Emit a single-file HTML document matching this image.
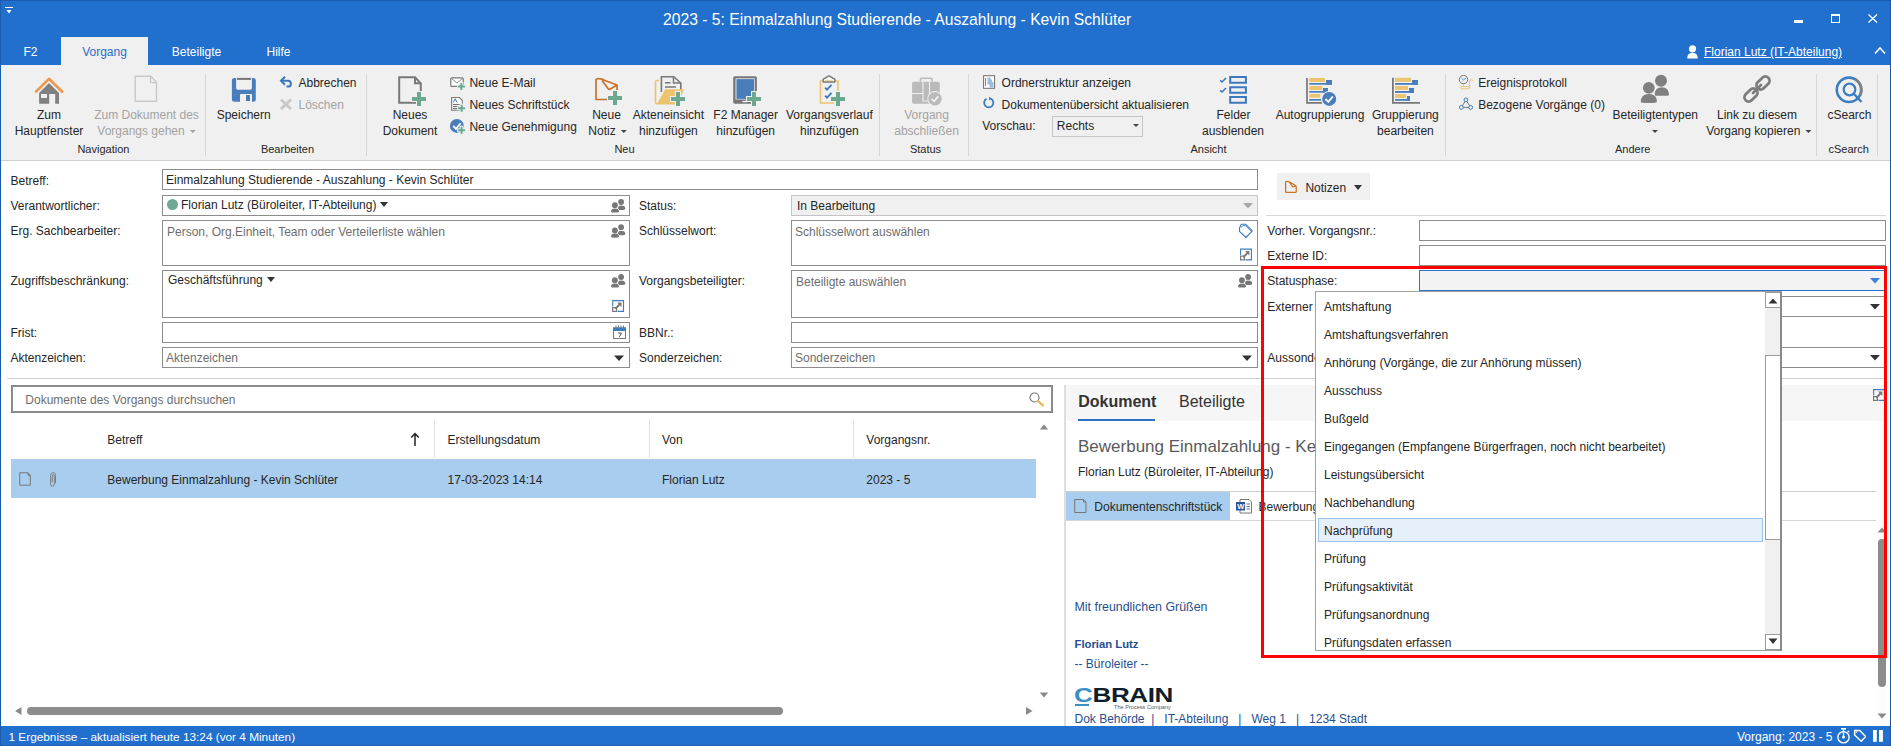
<!DOCTYPE html>
<html><head><meta charset="utf-8">
<style>
*{box-sizing:border-box;margin:0;padding:0}
html,body{width:1891px;height:746px;overflow:hidden;background:#fff;font-family:"Liberation Sans",sans-serif;font-size:12px;color:#262626}
.a{position:absolute}
.t{position:absolute;white-space:nowrap;line-height:16px;font-size:12px;color:#262626}
.c{transform:translateX(-50%);text-align:center}
.dis{color:#a3a3a3}
.w{color:#fff}
.sep{position:absolute;top:74px;width:1px;height:82px;background:#d6d6d6}
.box{position:absolute;border:1px solid #8c8c8c;background:#fff}
.ph{color:#6e6e6e}
svg{position:absolute;overflow:visible}
.dd{display:inline-block;width:0;height:0;border-left:3px solid transparent;border-right:3px solid transparent;border-top:3px solid #444;margin-left:5px;vertical-align:2px}
.gl{font-size:11px}
</style></head><body>
<!-- title bar + tabs -->
<div class="a" style="left:0;top:0;width:1891px;height:65px;background:#2170ce"></div>
<div id="title" class="t w" style="left:663px;top:10px;font-size:15.7px;line-height:20px">2023 - 5: Einmalzahlung Studierende - Auszahlung - Kevin Schlüter</div>


<!-- quick access -->
<div class="a" style="left:5px;top:7px;width:8px;height:1px;background:#fff"></div>
<svg style="left:0;top:0" width="20" height="20"><path d="M6.5 10 L11.5 10 L9 13.5 Z" fill="#fff"/></svg>
<!-- window controls -->
<div class="a" style="left:1794px;top:20px;width:9px;height:3px;background:#fff"></div>
<svg style="left:0;top:0" width="1891" height="30"><rect x="1831.5" y="14.5" width="8" height="8" fill="none" stroke="#fff" stroke-width="1"/><rect x="1831" y="14" width="9" height="2" fill="#fff"/>
<path d="M1868.5 14.5 L1877 22.5 M1877 14.5 L1868.5 22.5" stroke="#fff" stroke-width="1.3"/></svg>
<!-- user -->
<svg style="left:1687px;top:45px" width="12" height="14"><circle cx="5.5" cy="3.8" r="3.6" fill="#fff"/><path d="M0.3 13.5 C0.3 9 2.5 8 5.5 8 C8.5 8 10.7 9 10.7 13.5 Z" fill="#fff"/></svg>
<div class="t w" style="left:1704px;top:44px;text-decoration:underline">Florian Lutz (IT-Abteilung)</div>
<svg style="left:1874px;top:46px" width="13" height="9"><path d="M1 7.5 L6 2 L11 7.5" fill="none" stroke="#fff" stroke-width="1.6"/></svg>
<!-- tabs -->
<div class="t w c" style="left:30.5px;top:44px">F2</div>
<div class="a" style="left:61px;top:37px;width:87px;height:28px;background:#f0f0f0"></div>
<div class="t c" style="left:104.5px;top:44px;color:#2b6fc7">Vorgang</div>
<div class="t w c" style="left:196.5px;top:44px">Beteiligte</div>
<div class="t w c" style="left:278.5px;top:44px">Hilfe</div>

<!-- ribbon -->
<div class="a" style="left:1px;top:65px;width:1889px;height:96px;background:#f0f0f0;border-bottom:1px solid #cfcfcf"></div>


<svg style="left:0;top:0" width="1891" height="161">
<!-- house -->
<path d="M39.1 93 L49 83 L59 93 V103.8 H39.1 Z" fill="#808080"/>
<rect x="41" y="94" width="6" height="4" fill="#f0f0f0"/><rect x="49.2" y="94" width="6" height="10" fill="#f0f0f0"/>
<path d="M36 91.7 L49 78.8 L62.2 91.7" fill="none" stroke="#f0954a" stroke-width="2.6" stroke-linecap="round" stroke-linejoin="round"/>
<!-- disabled doc -->
<path d="M135.3 76.3 H150.7 L156.5 82.3 V101.3 H135.3 Z M150.5 76.3 V82.6 H156.5" fill="none" stroke="#c9c9c9" stroke-width="1.4"/>
<!-- save -->
<rect x="231.9" y="77.9" width="23.9" height="23.9" rx="2.5" fill="#4a7ebb"/>
<path d="M236.1 77.9 H251.9 V88 Q251.9 89.7 250.2 89.7 H237.8 Q236.1 89.7 236.1 88 Z" fill="#f0f0f0"/>
<rect x="237" y="77.9" width="14" height="2" fill="#777"/>
<path d="M240 101.9 V95 Q240 93.9 241 93.9 H251 Q252 93.9 252 95 V101.9 Z" fill="#f0f0f0"/>
<rect x="246" y="95" width="4" height="6" fill="#4a7ebb"/>
<!-- undo -->
<path d="M285 76.8 L281 80.8 L285 84.8" fill="none" stroke="#3d77bd" stroke-width="2"/>
<path d="M281.5 80.8 H288 A2.9 2.9 0 0 1 288 86.6 H286.5" fill="none" stroke="#3d77bd" stroke-width="2"/>
<!-- X disabled -->
<path d="M281 99.5 L291 109 M291 99.5 L281 109" stroke="#c8c8c8" stroke-width="3"/>
<!-- neues dokument -->
<path d="M399.2 77.2 H415 L420.8 83.3 V102.8 H399.2 Z M415 77.2 V83.3 H420.8" fill="none" stroke="#787878" stroke-width="2"/>
<path d="M411 95.9h16v6h-16z M416.0 90.9h6v16h-6z" fill="#f0f0f0"/><path d="M412 96.9h14v4h-14z M417.0 91.9h4v14h-4z" fill="#6ba88f"/>
<!-- email -->
<rect x="450.8" y="77.8" width="12.4" height="8.6" rx="1" fill="#fff" stroke="#7a7a7a" stroke-width="1.2"/>
<path d="M451.5 78.5 L457 83 L462.5 78.5" fill="none" stroke="#7a7a7a" stroke-width="0.9"/>
<path d="M456.9 84.4h9.0v4h-9.0z M459.4 81.9h4v9.0h-4z" fill="#f0f0f0"/><path d="M457.9 85.4h7.0v2h-7.0z M460.4 82.9h2v7.0h-2z" fill="#6ba88f"/>
<!-- schriftstueck -->
<path d="M451.6 97.5 H459.5 L462.3 100.3 V110.3 H451.6 Z" fill="#fff" stroke="#7a7a7a" stroke-width="1.1"/>
<path d="M453.3 102.5 L455.2 98.8 L457.1 102.5" fill="none" stroke="#3d77bd" stroke-width="1"/>
<path d="M453 104.6 H460 M453 106.6 H459 M453 108.6 H458" stroke="#555" stroke-width="0.9"/>
<path d="M457.1 106.3h9.0v4h-9.0z M459.6 103.8h4v9.0h-4z" fill="#f0f0f0"/><path d="M458.1 107.3h7.0v2h-7.0z M460.6 104.8h2v7.0h-2z" fill="#6ba88f"/>
<!-- genehmigung -->
<circle cx="456.9" cy="125.9" r="7" fill="#4a7ebb"/>
<path d="M453.2 126 L456 128.8 L460.6 123.2" fill="none" stroke="#fff" stroke-width="1.8"/>
<path d="M457.1 128.2h9.0v4h-9.0z M459.6 125.69999999999999h4v9.0h-4z" fill="#f0f0f0"/><path d="M458.1 129.2h7.0v2h-7.0z M460.6 126.69999999999999h2v7.0h-2z" fill="#6ba88f"/>
<!-- neue notiz -->
<path d="M596 79 Q601 78 605 80.5 L617 85 V91 M617 85 L610.3 89 Q609 90 608 88.5 L602 80.5 M596 79 V99.5 H608" fill="none" stroke="#c8732a" stroke-width="1.7" stroke-linejoin="round"/>
<path d="M607 95.0h16v6h-16z M612.0 90h6v16h-6z" fill="#f0f0f0"/><path d="M608 96.0h14v4h-14z M613.0 91h4v14h-4z" fill="#6ba88f"/>
<!-- akteneinsicht -->
<path d="M659 80.5 H656.6 Q655.5 80.5 655.5 81.6 V102.5 Q655.5 103.8 657 103.8 H675" fill="none" stroke="#ecc470" stroke-width="1.6"/>
<path d="M661.4 92 V76.7 H673.7 L680.8 83 V89.5" fill="none" stroke="#777" stroke-width="1.6"/>
<path d="M673.5 76.7 V83 H680.8 M665 82.8 H670.5 M665 87 H676" fill="none" stroke="#777" stroke-width="1.5"/>
<path d="M657 103.8 L665.2 89.3 H684 L680 100 L676 103.8 Z" fill="#ecc470"/>
<path d="M670 96.0h16v6h-16z M675.0 91h6v16h-6z" fill="#f0f0f0"/><path d="M671 97.0h14v4h-14z M676.0 92h4v14h-4z" fill="#6ba88f"/>
<!-- f2 manager -->
<rect x="733.2" y="76.2" width="23.7" height="27.5" rx="1.6" fill="#777"/>
<rect x="735.6" y="78.4" width="19" height="21" fill="#fff"/>
<rect x="736.4" y="79.1" width="17.6" height="19.8" fill="#4a7ebb"/>
<rect x="742.5" y="100.9" width="4" height="1.3" fill="#fff"/>
<path d="M746 95.9h16v6h-16z M751.0 90.9h6v16h-6z" fill="#f0f0f0"/><path d="M747 96.9h14v4h-14z M752.0 91.9h4v14h-4z" fill="#6ba88f"/>
<!-- vorgangsverlauf -->
<path d="M822.5 81 H820.5 V103 H834 M835.5 81 H838 V91" fill="none" stroke="#ecc470" stroke-width="1.6"/>
<path d="M823.3 82 Q822.4 78.5 825 78.3 L827.5 76.6 Q829 75.3 830.5 76.6 L833 78.3 Q835.8 78.5 834.7 82 Z" fill="#fff" stroke="#777" stroke-width="1.5"/>
<path d="M825 80.3 H832.6" stroke="#ecc470" stroke-width="0.9"/>
<path d="M825.1 87.6 L827 89.6 L831.5 84.9 M825.1 95.6 L827 97.6 L831.5 92.9" fill="none" stroke="#3d77bd" stroke-width="1.8"/>
<path d="M830 95.9h16v6h-16z M835.0 90.9h6v16h-6z" fill="#f0f0f0"/><path d="M831 96.9h14v4h-14z M836.0 91.9h4v14h-4z" fill="#6ba88f"/>
<!-- vorgang abschliessen disabled -->
<path d="M920.4 81.5 V79.8 Q920.4 78.2 922 78.2 H930.5 Q932 78.2 932 79.8 V81.5" fill="none" stroke="#bababa" stroke-width="1.6"/>
<rect x="912.1" y="81.8" width="27.7" height="22" rx="1.8" fill="#bababa"/>
<path d="M912 93.5 H923 M923 81.8 V101 H929.5 V81.8" fill="none" stroke="#f0f0f0" stroke-width="1.1"/>
<circle cx="935" cy="98.7" r="7.6" fill="#f0f0f0"/><circle cx="935" cy="98.7" r="6.7" fill="#bababa"/>
<path d="M931.5 98.8 L934 101.3 L938.3 96.3" fill="none" stroke="#f0f0f0" stroke-width="1.8"/>
<!-- ordnerstruktur -->
<rect x="983.6" y="75.7" width="11" height="12.6" fill="#fff" stroke="#6d6d6d" stroke-width="1"/>
<path d="M985.5 78 V86" stroke="#555" stroke-width="0.7"/>
<path d="M987.5 77.5 h3 v2 h1.5 v2.5 h1.5 v5.5 h-4 v-3 h-2 Z" fill="#9dbbdc"/>
<!-- refresh -->
<path d="M986.5 98.8 A4.6 4.6 0 1 0 991 98.8" fill="none" stroke="#3d7cc0" stroke-width="1.8"/>
<path d="M989.3 96.5 L991.8 98.8 L988.8 100.5 Z" fill="#3d7cc0"/>
<!-- felder ausblenden -->
<path d="M1230.2 77 h15.7 v5.7 h-15.7 Z M1230.2 87.2 h15.7 v5.5 h-15.7 Z M1230.2 97.1 h15.7 v5.7 h-15.7 Z" fill="none" stroke="#3d78bd" stroke-width="2"/>
<path d="M1220.2 80.3 L1222 82 L1226 78 M1220.2 90.3 L1222 92 L1226 88" fill="none" stroke="#3d78bd" stroke-width="1.6"/>
<!-- autogruppierung -->
<path d="M1307 77.9 V102.9 H1322" fill="none" stroke="#777" stroke-width="1.7"/>
<rect x="1309.3" y="78" width="15.7" height="4" fill="#eac46e"/><rect x="1326" y="80" width="6" height="4.7" fill="#4a7ebb"/><rect x="1309.3" y="83" width="22.7" height="1.7" fill="#4a7ebb"/>
<rect x="1309.3" y="86" width="13" height="4" fill="#eac46e"/><rect x="1323" y="88" width="5" height="4.7" fill="#4a7ebb"/><rect x="1309.3" y="91" width="18.7" height="1.7" fill="#4a7ebb"/>
<rect x="1309.3" y="94" width="11" height="3.7" fill="#eac46e"/><rect x="1309.3" y="99" width="12" height="1.7" fill="#4a7ebb"/>
<circle cx="1329.2" cy="98.9" r="7.8" fill="#f0f0f0"/><circle cx="1329.2" cy="98.9" r="7" fill="#4a7ebb"/>
<path d="M1325.5 99 L1328.3 101.8 L1332.8 96.5" fill="none" stroke="#fff" stroke-width="1.9"/>
<!-- gruppierung bearbeiten -->
<path d="M1392.9 77.8 V102.9 H1420" fill="none" stroke="#777" stroke-width="1.8"/>
<rect x="1395" y="77.8" width="16" height="4" fill="#eac46e"/><rect x="1412" y="80" width="6" height="4.8" fill="#4a7ebb"/><rect x="1395" y="83" width="23" height="1.8" fill="#4a7ebb"/>
<rect x="1395" y="86" width="13" height="3.9" fill="#eac46e"/><rect x="1409" y="88" width="5" height="4.9" fill="#4a7ebb"/><rect x="1395" y="91" width="19" height="1.9" fill="#4a7ebb"/>
<rect x="1395" y="94.1" width="11" height="3.9" fill="#eac46e"/><rect x="1407" y="96" width="3" height="4.8" fill="#4a7ebb"/><rect x="1395" y="99" width="15" height="1.8" fill="#4a7ebb"/>
<!-- ereignisprotokoll -->
<circle cx="1463.5" cy="79.6" r="4.2" fill="none" stroke="#666" stroke-width="0.9"/>
<path d="M1461.6 78.2 L1463.5 80 L1465.8 78.2" fill="none" stroke="#3d77bd" stroke-width="0.9"/>
<path d="M1463.5 84 V86.3" stroke="#ecc470" stroke-width="1"/>
<path d="M1462 86.6 H1468.5 Q1469.8 86.6 1469.8 87.7 Q1469.8 88.8 1468.5 88.8 H1462 Q1460.7 88.8 1460.7 87.7 Q1460.7 86.6 1462 86.6 Z" fill="none" stroke="#ecc470" stroke-width="1"/>
<path d="M1469.6 88 V81 Q1469.6 79.8 1470.8 79.8 H1471.8 Q1473 79.8 1473 81" fill="none" stroke="#ecc470" stroke-width="1"/>
<!-- bezogene -->
<path d="M1465.9 99.9 L1461.4 107.4 L1470.7 107.4 Z" fill="none" stroke="#666" stroke-width="0.9"/>
<circle cx="1465.9" cy="99.9" r="1.9" fill="#f0f0f0" stroke="#3d77bd" stroke-width="1"/>
<circle cx="1461.4" cy="107.4" r="1.9" fill="#f0f0f0" stroke="#3d77bd" stroke-width="1"/>
<circle cx="1470.7" cy="107.4" r="1.9" fill="#f0f0f0" stroke="#3d77bd" stroke-width="1"/>
<!-- beteiligtentypen -->
<circle cx="1661" cy="80.8" r="6" fill="#808080"/>
<path d="M1654.5 95.8 Q1654.3 87.5 1661.5 87.2 Q1669 87.5 1669 94.5 Q1669 95.8 1667 95.8 Z" fill="#808080"/>
<circle cx="1648.8" cy="87.8" r="6.9" fill="#f0f0f0"/>
<path d="M1639.8 103.5 Q1639.6 93 1648.8 93 Q1658 93 1658 103.5 Z" fill="#f0f0f0"/>
<circle cx="1648.8" cy="87.8" r="5.9" fill="#808080"/>
<path d="M1640.8 102 Q1640.8 94 1648.8 94 Q1657 94 1657 101.5 Q1657 103 1648.8 103 Q1640.8 103 1640.8 102 Z" fill="#808080"/>
<!-- link -->
<g fill="none" stroke="#7d7d7d" stroke-width="2.8">
<rect x="-7.5" y="-4.2" width="15" height="8.4" rx="4.2" transform="translate(1763 83) rotate(-45)" />
<rect x="-7.5" y="-4.2" width="15" height="8.4" rx="4.2" transform="translate(1751 95) rotate(-45)" />
</g>
<path d="M1753 93 L1761 85" stroke="#7d7d7d" stroke-width="2.8" stroke-linecap="round"/>
<!-- csearch -->
<circle cx="1849" cy="89.8" r="12.2" fill="none" stroke="#3d7cc0" stroke-width="2.6"/>
<path d="M1855 79.2 A12.2 12.2 0 0 1 1860.2 95.2" fill="none" stroke="#808080" stroke-width="2.6"/>
<circle cx="1849.5" cy="89.5" r="5.8" fill="none" stroke="#3d7cc0" stroke-width="2.2"/>
<path d="M1853.8 93.8 L1861.5 102" stroke="#3d7cc0" stroke-width="2.4"/>
</svg>
<div class="sep" style="left:205px"></div><div class="sep" style="left:366px"></div><div class="sep" style="left:879px"></div><div class="sep" style="left:968px"></div><div class="sep" style="left:1445px"></div><div class="sep" style="left:1816px"></div><div class="sep" style="left:1877px"></div><div class="t c " style="left:49px;top:107px">Zum</div><div class="t c " style="left:49px;top:123px">Hauptfenster</div><div class="t c dis" style="left:146.5px;top:107px">Zum Dokument des</div><div class="t c dis" style="left:146.5px;top:123px">Vorgangs gehen<i class="dd" style="border-top-color:#a3a3a3"></i></div><div class="t c " style="left:243.7px;top:107px">Speichern</div><div class="t " style="left:298.5px;top:75px">Abbrechen</div><div class="t dis" style="left:298.5px;top:97px">Löschen</div><div class="t c " style="left:410px;top:107px">Neues</div><div class="t c " style="left:410px;top:123px">Dokument</div><div class="t " style="left:469.4px;top:75px">Neue E-Mail</div><div class="t " style="left:469.4px;top:97px">Neues Schriftstück</div><div class="t " style="left:469.4px;top:119px">Neue Genehmigung</div><div class="t c " style="left:606.5px;top:107px">Neue</div><div class="t c " style="left:607.5px;top:123px">Notiz<i class="dd"></i></div><div class="t c " style="left:668.4px;top:107px">Akteneinsicht</div><div class="t c " style="left:668.4px;top:123px">hinzufügen</div><div class="t c " style="left:745.7px;top:107px">F2 Manager</div><div class="t c " style="left:745.7px;top:123px">hinzufügen</div><div class="t c " style="left:829.4px;top:107px">Vorgangsverlauf</div><div class="t c " style="left:829.4px;top:123px">hinzufügen</div><div class="t c dis" style="left:926.6px;top:107px">Vorgang</div><div class="t c dis" style="left:926.6px;top:123px">abschließen</div><div class="t " style="left:1001.6px;top:75px">Ordnerstruktur anzeigen</div><div class="t " style="left:1001.6px;top:97px">Dokumentenübersicht aktualisieren</div><div class="t " style="left:982.2px;top:118px">Vorschau:</div><div class="box" style="left:1052px;top:116px;width:91px;height:21px;border-color:#c5c5c5;background:transparent"></div><div class="t " style="left:1056.8px;top:118px">Rechts</div><div class="t c " style="left:1233.5px;top:107px">Felder</div><div class="t c " style="left:1233px;top:123px">ausblenden</div><div class="t c " style="left:1320px;top:107px">Autogruppierung</div><div class="t c " style="left:1405.4px;top:107px">Gruppierung</div><div class="t c " style="left:1405.4px;top:123px">bearbeiten</div><div class="t " style="left:1478.2px;top:75px">Ereignisprotokoll</div><div class="t " style="left:1478.2px;top:97px">Bezogene Vorgänge (0)</div><div class="t c " style="left:1655.3px;top:107px">Beteiligtentypen</div><div class="t c " style="left:1757px;top:107px">Link zu diesem</div><div class="t c " style="left:1758.8px;top:123px">Vorgang kopieren<i class="dd"></i></div><div class="t c " style="left:1849.5px;top:107px">cSearch</div><div class="t c " style="left:103.4px;top:141px;font-size:11px">Navigation</div><div class="t c " style="left:287.5px;top:141px;font-size:11px">Bearbeiten</div><div class="t c " style="left:624.5px;top:141px;font-size:11px">Neu</div><div class="t c " style="left:925.5px;top:141px;font-size:11px">Status</div><div class="t c " style="left:1208.5px;top:141px;font-size:11px">Ansicht</div><div class="t c " style="left:1632.7px;top:141px;font-size:11px">Andere</div><div class="t c " style="left:1848.7px;top:141px;font-size:11px">cSearch</div><svg style="left:0;top:0" width="1891" height="161">
<path d="M1133 124 h6 l-3 3z" fill="#444"/>
<path d="M1652 130 h6 l-3 3z" fill="#444"/>
</svg>
<!-- form area -->

<div class="t" style="left:10.5px;top:172.6px;">Betreff:</div><div class="t" style="left:10.5px;top:197.7px;">Verantwortlicher:</div><div class="t" style="left:10.5px;top:223px;">Erg. Sachbearbeiter:</div><div class="t" style="left:10.5px;top:273px;">Zugriffsbeschränkung:</div><div class="t" style="left:10.5px;top:324.8px;">Frist:</div><div class="t" style="left:10.5px;top:349.5px;">Aktenzeichen:</div><div class="t" style="left:639px;top:197.5px;">Status:</div><div class="t" style="left:639px;top:223px;">Schlüsselwort:</div><div class="t" style="left:639px;top:273px;">Vorgangsbeteiligter:</div><div class="t" style="left:639px;top:324.5px;">BBNr.:</div><div class="t" style="left:639px;top:349.5px;">Sonderzeichen:</div><div class="box" style="left:162px;top:169px;width:1096px;height:21px;"></div><div class="box" style="left:162px;top:195px;width:468px;height:21px;"></div><div class="box" style="left:162px;top:220px;width:468px;height:46px;"></div><div class="box" style="left:162px;top:270px;width:468px;height:48px;"></div><div class="box" style="left:162px;top:322px;width:468px;height:21px;"></div><div class="box" style="left:162px;top:347px;width:468px;height:21px;"></div><div class="box" style="left:791px;top:195px;width:467px;height:21px;background:#f0f0f0;border-color:#c4c4c4"></div><div class="box" style="left:791px;top:220px;width:467px;height:46px;"></div><div class="box" style="left:791px;top:270px;width:467px;height:48px;"></div><div class="box" style="left:791px;top:322px;width:467px;height:21px;"></div><div class="box" style="left:791px;top:347px;width:467px;height:21px;"></div><div class="t" style="left:166px;top:172px;">Einmalzahlung Studierende - Auszahlung - Kevin Schlüter</div><div class="a" style="left:167px;top:199px;width:11px;height:11px;border-radius:50%;background:#6fa894"></div><div class="t" style="left:181px;top:197px;">Florian Lutz (Büroleiter, IT-Abteilung)<i class="dd" style="border-left-width:4.5px;border-right-width:4.5px;border-top-width:5px;border-top-color:#333;margin-left:4px;vertical-align:2px"></i></div><div class="t" style="left:167px;top:224px;color:#6e6e6e">Person, Org.Einheit, Team oder Verteilerliste wählen</div><div class="t" style="left:168px;top:272px;">Geschäftsführung<i class="dd" style="border-left-width:4.5px;border-right-width:4.5px;border-top-width:5px;border-top-color:#333;margin-left:4px;vertical-align:2px"></i></div><div class="t" style="left:166px;top:350px;color:#6e6e6e">Aktenzeichen</div><div class="t" style="left:797px;top:197.5px;">In Bearbeitung</div><div class="t" style="left:795px;top:224px;color:#6e6e6e">Schlüsselwort auswählen</div><div class="t" style="left:796px;top:274px;color:#6e6e6e">Beteiligte auswählen</div><div class="t" style="left:795px;top:350px;color:#6e6e6e">Sonderzeichen</div><svg style="left:0;top:0" width="1891" height="400"><g transform="translate(611 199)"><circle cx="10.1" cy="3" r="3.7" fill="#fff"/><path d="M6 11 Q6 6.5 10.1 6.5 Q14.3 6.5 14.3 9.5 Q14.3 11 10.1 11 Z" fill="#777"/><circle cx="10.1" cy="3" r="2.9" fill="#777"/>
<circle cx="3.9" cy="6.2" r="3.8" fill="#fff"/><path d="M-0.6 14 Q-0.6 8.5 4 8.5 Q8.8 8.5 8.8 14 Z" fill="#fff"/><circle cx="3.9" cy="6.2" r="2.9" fill="#777"/><path d="M0 12.4 Q0 9.4 4 9.4 Q8 9.4 8 12.4 Q8 13.6 4 13.6 Q0 13.6 0 12.4 Z" fill="#777"/></g><g transform="translate(611 224.2)"><circle cx="10.1" cy="3" r="3.7" fill="#fff"/><path d="M6 11 Q6 6.5 10.1 6.5 Q14.3 6.5 14.3 9.5 Q14.3 11 10.1 11 Z" fill="#777"/><circle cx="10.1" cy="3" r="2.9" fill="#777"/>
<circle cx="3.9" cy="6.2" r="3.8" fill="#fff"/><path d="M-0.6 14 Q-0.6 8.5 4 8.5 Q8.8 8.5 8.8 14 Z" fill="#fff"/><circle cx="3.9" cy="6.2" r="2.9" fill="#777"/><path d="M0 12.4 Q0 9.4 4 9.4 Q8 9.4 8 12.4 Q8 13.6 4 13.6 Q0 13.6 0 12.4 Z" fill="#777"/></g><g transform="translate(611 274)"><circle cx="10.1" cy="3" r="3.7" fill="#fff"/><path d="M6 11 Q6 6.5 10.1 6.5 Q14.3 6.5 14.3 9.5 Q14.3 11 10.1 11 Z" fill="#777"/><circle cx="10.1" cy="3" r="2.9" fill="#777"/>
<circle cx="3.9" cy="6.2" r="3.8" fill="#fff"/><path d="M-0.6 14 Q-0.6 8.5 4 8.5 Q8.8 8.5 8.8 14 Z" fill="#fff"/><circle cx="3.9" cy="6.2" r="2.9" fill="#777"/><path d="M0 12.4 Q0 9.4 4 9.4 Q8 9.4 8 12.4 Q8 13.6 4 13.6 Q0 13.6 0 12.4 Z" fill="#777"/></g><g transform="translate(1238 274)"><circle cx="10.1" cy="3" r="3.7" fill="#fff"/><path d="M6 11 Q6 6.5 10.1 6.5 Q14.3 6.5 14.3 9.5 Q14.3 11 10.1 11 Z" fill="#777"/><circle cx="10.1" cy="3" r="2.9" fill="#777"/>
<circle cx="3.9" cy="6.2" r="3.8" fill="#fff"/><path d="M-0.6 14 Q-0.6 8.5 4 8.5 Q8.8 8.5 8.8 14 Z" fill="#fff"/><circle cx="3.9" cy="6.2" r="2.9" fill="#777"/><path d="M0 12.4 Q0 9.4 4 9.4 Q8 9.4 8 12.4 Q8 13.6 4 13.6 Q0 13.6 0 12.4 Z" fill="#777"/></g><g transform="translate(612.1 300)"><path d="M0.6 6.5 V0.6 H11.4 V11.4 H5.5" fill="none" stroke="#3d7cc0" stroke-width="1.1"/><rect x="0.6" y="7.6" width="3.8" height="3.8" fill="#fff" stroke="#777" stroke-width="1.2"/><path d="M3.2 8.8 L7.6 4.4" stroke="#777" stroke-width="2"/><path d="M5 2.6 H9.4 V7 Z" fill="#777"/></g><g transform="translate(1240 248.5)"><path d="M0.6 6.5 V0.6 H11.4 V11.4 H5.5" fill="none" stroke="#3d7cc0" stroke-width="1.1"/><rect x="0.6" y="7.6" width="3.8" height="3.8" fill="#fff" stroke="#777" stroke-width="1.2"/><path d="M3.2 8.8 L7.6 4.4" stroke="#777" stroke-width="2"/><path d="M5 2.6 H9.4 V7 Z" fill="#777"/></g><g transform="translate(613 325)"><rect x="0.5" y="3" width="12" height="10.5" fill="#fff" stroke="#777" stroke-width="1"/><rect x="0" y="2.5" width="13" height="3.5" fill="#3d7cc0"/><path d="M3 0.5V3 M5.5 0.5V3 M8 0.5V3 M10.5 0.5V3" stroke="#777" stroke-width="1"/><path d="M5 8 H8.5 L6.3 12" fill="none" stroke="#555" stroke-width="1"/></g><path d="M614 355.5 h10 l-5 5.5 z" fill="#333"/><path d="M1242 355.5 h10 l-5 5.5 z" fill="#333"/><path d="M1243 203 h10 l-5 5.5 z" fill="#a8a8a8"/><g transform="translate(1238.5 223.5)"><path d="M1 4.5 L2.8 0.8 H7.3 L13.8 7.3 L7.5 14 L1 7.8 Z" fill="none" stroke="#3d7cc0" stroke-width="1.1" stroke-linejoin="round"/><path d="M2.5 4.2 L4 2.2 H7 L12.5 7.5" fill="none" stroke="#3d7cc0" stroke-width="0.9"/></g></svg><div class="a" style="left:1277px;top:173px;width:93px;height:27px;background:#f0f0f0"></div><svg style="left:1284px;top:180px" width="15" height="15"><path d="M1.6 2.2 Q1.6 1.4 3 1.4 Q4.5 1.4 6 2.3 L11.2 5.3 Q12.2 5.9 12.2 7 V11.5 Q12.2 12.4 11.3 12.4 H2.5 Q1.6 12.4 1.6 11.5 Z M5.5 2.3 L8.8 7 L11.8 5.8" fill="none" stroke="#c8732a" stroke-width="1.3" stroke-linejoin="round"/></svg><div class="t" style="left:1305.4px;top:179.8px;">Notizen<i class="dd" style="border-left-width:4.5px;border-right-width:4.5px;border-top-width:5px;border-top-color:#333;margin-left:8px;vertical-align:2px"></i></div><div class="a" style="left:1266px;top:215px;width:620px;height:1px;background:#d8d8d8"></div><div class="t" style="left:1267.3px;top:223.3px;">Vorher. Vorgangsnr.:</div><div class="t" style="left:1267.3px;top:247.7px;">Externe ID:</div><div class="t" style="left:1267.3px;top:272.6px;">Statusphase:</div><div class="t" style="left:1267.3px;top:298.9px;">Externer Zugriff:</div><div class="t" style="left:1267.3px;top:349.6px;">Aussonderung:</div><div class="box" style="left:1419px;top:220px;width:467px;height:21px;"></div><div class="box" style="left:1419px;top:245px;width:467px;height:21px;"></div><div class="box" style="left:1419px;top:296px;width:467px;height:21px;"></div><div class="box" style="left:1419px;top:316px;width:467px;height:32px;"></div><div class="box" style="left:1419px;top:347px;width:467px;height:21px;"></div><div class="box" style="left:1419px;top:270px;width:467px;height:21px;border-color:#2d72cc;background:#f3f3f3"></div><svg style="left:0;top:0" width="1891" height="400"><path d="M1870 278 h10 l-5 5.5 z" fill="#3c7fd6"/><path d="M1870 304 h10 l-5 5.5 z" fill="#333"/><path d="M1870 355 h10 l-5 5.5 z" fill="#333"/></svg><div class="a" style="left:7px;top:378px;width:1879px;height:1px;background:#d2d2d2"></div>
<!-- lower area -->

<div class="a" style="left:11px;top:385px;width:1042px;height:28px;border:2px solid #8a8a8a;background:#fff"></div><div class="t" style="left:25.3px;top:392px;color:#6e6e6e">Dokumente des Vorgangs durchsuchen</div><svg style="left:1029px;top:392px" width="16" height="15"><circle cx="5.5" cy="5.5" r="4.5" fill="none" stroke="#777" stroke-width="1.2"/><path d="M9 9 L14 13.5" stroke="#e8b44a" stroke-width="2.2" stroke-linecap="round"/></svg><div class="t" style="left:107.3px;top:431.8px;">Betreff</div><div class="t" style="left:447.6px;top:431.8px;">Erstellungsdatum</div><div class="t" style="left:662px;top:431.8px;">Von</div><div class="t" style="left:866.3px;top:431.8px;">Vorgangsnr.</div><svg style="left:0;top:0" width="1891" height="746"><path d="M415 434 V446 M411.3 437.5 L415 433.5 L418.7 437.5" fill="none" stroke="#222" stroke-width="1.5"/><path d="M434.5 419 V458 M649.5 419 V458 M853.5 419 V458" stroke="#e3e3e3" stroke-width="1"/><path d="M1039.8 429.5 h8.4 l-4.2 -5 z M1039.8 692.5 h8.4 l-4.2 5 z" fill="#8a8a8a"/><path d="M21.5 707 v8 l-6.5 -4 z M1026 707 v8 l6.5 -4 z" fill="#8a8a8a"/></svg><div class="a" style="left:11px;top:459px;width:1025px;height:39px;background:#a8cdee"></div><svg style="left:0;top:0" width="1891" height="746"><path d="M19.7 472.8 H28 L30.3 475.2 V485.2 H19.7 Z M28 472.8 V475.3 H30.3" fill="none" stroke="#777" stroke-width="1"/><path d="M55.5 483 V475.5 Q55.5 472.6 53.5 472.6 Q50.6 472.6 50.6 475.5 V484 Q50.6 486.3 52.5 486.3 Q54.4 486.3 54.4 484 V476.5 Q54.4 474.5 53.3 474.5 Q52.3 474.5 52.3 476.5 V482" fill="none" stroke="#777" stroke-width="0.9"/></svg><div class="t" style="left:107.3px;top:471.6px;">Bewerbung Einmalzahlung - Kevin Schlüter</div><div class="t" style="left:447.6px;top:471.6px;">17-03-2023 14:14</div><div class="t" style="left:662px;top:471.6px;">Florian Lutz</div><div class="t" style="left:866.3px;top:471.6px;">2023 - 5</div><div class="a" style="left:27px;top:707px;width:756px;height:8px;border-radius:4px;background:#8c8c8c"></div><div class="a" style="left:1064px;top:385px;width:2px;height:341px;background:#dedede"></div><div class="a" style="left:1066px;top:385px;width:820px;height:36px;background:#f6f6f6"></div><div class="t" style="left:1078.2px;top:394.5px;font-size:16px;line-height:20px;top:392px;font-weight:bold;color:#333">Dokument</div><div class="a" style="left:1078px;top:419px;width:77px;height:2px;background:#2b6fc7"></div><div class="t" style="left:1179px;top:394.5px;font-size:16px;line-height:20px;top:392px;color:#333">Beteiligte</div><div class="t" style="left:1078px;top:438.5px;font-size:17px;line-height:22px;top:435.5px;color:#5a5a5a">Bewerbung Einmalzahlung - Kevin Schlüter</div><div class="t" style="left:1078px;top:464.2px;">Florian Lutz (Büroleiter, IT-Abteilung)</div><div class="a" style="left:1066px;top:491px;width:820px;height:1px;background:#cfcfcf"></div><div class="a" style="left:1066px;top:492px;width:164px;height:29px;background:#a8cdee"></div><div class="a" style="left:1066px;top:520px;width:810px;height:1px;background:#d5d5d5"></div><svg style="left:0;top:0" width="1891" height="746"><path d="M1074.7 499.5 H1083.5 L1086 502 V512.5 H1074.7 Z M1083.5 499.5 V502 H1086" fill="none" stroke="#777" stroke-width="1"/><path d="M1240 499.5 H1249 L1251.5 502 V513 H1240 Z" fill="#fff" stroke="#777" stroke-width="1"/><rect x="1236" y="502" width="9" height="8.5" fill="#2b5797"/><text x="1237.2" y="509.2" font-family="Liberation Sans" font-size="7.5" font-weight="bold" fill="#fff">W</text><path d="M1246.5 504 h3.5 M1246.5 506.5 h3.5 M1246.5 509 h3.5" stroke="#2b5797" stroke-width="0.8"/></svg><div class="t" style="left:1094.3px;top:499px;">Dokumentenschriftstück</div><div class="t" style="left:1258.5px;top:499px;">Bewerbung Einmalzahlung.docx</div><div class="a" style="left:1066px;top:521px;width:810px;height:205px;background:#fff"></div><div class="t" style="left:1074.5px;top:598.7px;font-size:12.4px;color:#1f4f8f">Mit freundlichen Grüßen</div><div class="t" style="left:1074.5px;top:636px;font-size:11.3px;font-weight:bold;color:#1f4f8f">Florian Lutz</div><div class="t" style="left:1074.5px;top:656px;font-size:12px;color:#1f4f8f">-- Büroleiter --</div><div class="t" style="left:1074px;top:683px;font-size:21px;line-height:24px;font-weight:bold;color:#0d1e2d;transform:scaleX(1.24);transform-origin:0 0;letter-spacing:-0.3px"><span style="color:#3a8fc8">C</span>BRAIN</div>
<div class="a" style="left:1075px;top:704px;width:14px;height:2px;background:#3a8fc8"></div>
<div class="t" style="left:1114px;top:703px;font-size:5.6px;line-height:8px;color:#555">The Process Company</div><div class="t" style="left:1074.5px;top:711px;color:#1f4f8f">Dok Behörde&nbsp;&nbsp;|&nbsp;&nbsp; IT-Abteilung&nbsp;&nbsp; |&nbsp;&nbsp; Weg 1&nbsp;&nbsp; |&nbsp;&nbsp; 1234 Stadt</div><div class="a" style="left:1876px;top:421px;width:10px;height:305px;background:#fdfdfd"></div><div class="a" style="left:1878px;top:539px;width:8px;height:148px;border-radius:4px;background:#8c8c8c"></div><svg style="left:0;top:0" width="1891" height="746"><path d="M1877.5 532.5 h9 l-4.5 -5 z M1877.5 713.5 h9 l-4.5 5 z" fill="#8a8a8a"/></svg><svg style="left:1873px;top:389px" width="13" height="13"><path d="M0.6 6.5 V0.6 H11.4 V11.4 H5.5" fill="none" stroke="#3d7cc0" stroke-width="1.1"/><rect x="0.6" y="7.6" width="3.8" height="3.8" fill="#fff" stroke="#777" stroke-width="1.2"/><path d="M3.2 8.8 L7.6 4.4" stroke="#777" stroke-width="2"/><path d="M5 2.6 H9.4 V7 Z" fill="#777"/></svg>
<div class="a" style="left:1315px;top:291px;width:467px;height:360px;background:#fff;border:1px solid #a0a0a0"></div><div class="a" style="left:1318px;top:518px;width:445px;height:24px;background:#e5f0fb;border:1px solid #99c2ee"></div><div class="a" style="left:1316px;top:292px;width:449px;height:358px;overflow:hidden"><div class="t" style="left:8px;top:6.5px">Amtshaftung</div><div class="t" style="left:8px;top:34.5px">Amtshaftungsverfahren</div><div class="t" style="left:8px;top:62.5px">Anhörung (Vorgänge, die zur Anhörung müssen)</div><div class="t" style="left:8px;top:90.5px">Ausschuss</div><div class="t" style="left:8px;top:118.5px">Bußgeld</div><div class="t" style="left:8px;top:146.5px">Eingegangen (Empfangene Bürgerfragen, noch nicht bearbeitet)</div><div class="t" style="left:8px;top:174.5px">Leistungsübersicht</div><div class="t" style="left:8px;top:202.5px">Nachbehandlung</div><div class="t" style="left:8px;top:230.5px">Nachprüfung</div><div class="t" style="left:8px;top:258.5px">Prüfung</div><div class="t" style="left:8px;top:286.5px">Prüfungsaktivität</div><div class="t" style="left:8px;top:314.5px">Prüfungsanordnung</div><div class="t" style="left:8px;top:342.5px">Prüfungsdaten erfassen</div></div><div class="a" style="left:1765px;top:292px;width:16px;height:358px;background:#f0f0f0"></div><div class="a" style="left:1765px;top:292px;width:16px;height:16px;background:#fff;border:1px solid #9a9a9a"></div><div class="a" style="left:1765px;top:355px;width:16px;height:185px;background:#fff;border:1px solid #9a9a9a"></div><div class="a" style="left:1765px;top:634px;width:16px;height:16px;background:#fff;border:1px solid #9a9a9a"></div><div class="a" style="left:1780px;top:292px;width:2px;height:359px;background:#8a8a8a"></div><svg style="left:0;top:0" width="1891" height="746"><path d="M1768.5 303.5 h9 l-4.5 -5 z M1768.5 638.5 h9 l-4.5 5.5 z" fill="#333"/></svg><div class="a" style="left:1261px;top:266px;width:626px;height:392px;border:3px solid #ff0000"></div>

<!-- status bar -->

<div class="a" style="left:0;top:726px;width:1891px;height:20px;background:#2170ce"></div>
<div class="a" style="left:0;top:745px;width:1891px;height:1px;background:#1b5cae"></div>
<div class="t w" style="left:8.5px;top:729px;font-size:11.8px">1 Ergebnisse – aktualisiert heute 13:24 (vor 4 Minuten)</div>
<div class="t w" style="left:1737px;top:729px">Vorgang: 2023 - 5</div>
<svg style="left:0;top:0" width="1891" height="746">
<circle cx="1843.5" cy="737.3" r="5.6" fill="none" stroke="#fff" stroke-width="1.4"/><rect x="1841" y="728" width="5" height="1.6" fill="#fff"/><path d="M1843.5 729.5 V731.5 M1843.5 737.3 V732.8 M1847.6 732.3 L1849.2 730.9" stroke="#fff" stroke-width="1.3"/><circle cx="1843.5" cy="737.2" r="1.4" fill="#fff"/>
<path d="M1854.6 730.5 H1859.8 L1865.6 736.6 L1861.2 741.2 L1854.6 735 Z" fill="none" stroke="#fff" stroke-width="1.4" stroke-linejoin="round"/><path d="M1855.6 731.5 h2.2 l-2.2 2.2 z" fill="#fff"/>
<rect x="1873" y="730" width="3.8" height="11.8" fill="#fff"/><rect x="1879" y="730" width="3.9" height="11.8" fill="#fff"/>
</svg>
<div class="a" style="left:0;top:0;width:1891px;height:1px;background:#1b5cae"></div>
<div class="a" style="left:0;top:0;width:1px;height:746px;background:#1b5cae"></div>
<div class="a" style="left:1890px;top:0;width:1px;height:746px;background:#1b58aa"></div>
</body></html>
